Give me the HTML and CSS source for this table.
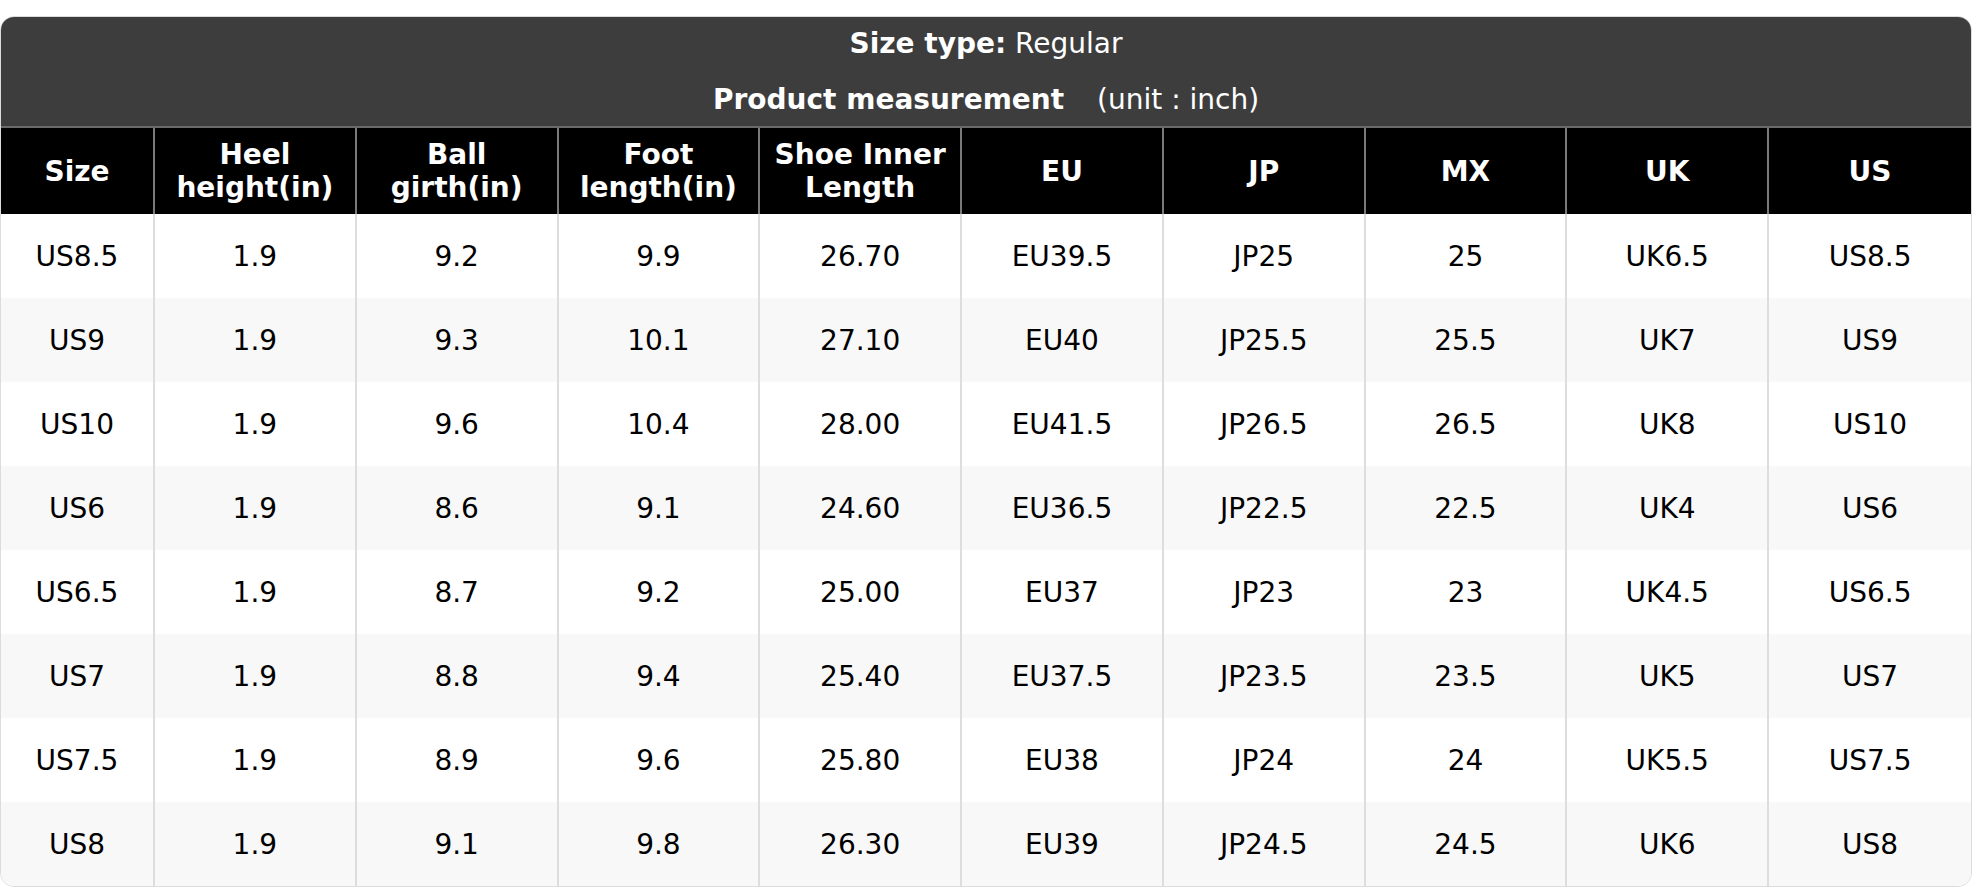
FILE: index.html
```html
<!DOCTYPE html>
<html lang="en">
<head>
<meta charset="utf-8">
<title>Size chart</title>
<link rel="stylesheet" href="styles.css">
</head>
<body>
<div class="chart">
  <div class="titles">
    <div class="title-line first"><b>Size type:</b> Regular</div>
    <div class="title-line second"><b>Product measurement</b> <span class="unit">(unit : inch)</span></div>
  </div>
  <table class="grid">
    <colgroup>
      <col class="col-size">
      <col><col><col><col><col><col><col><col><col>
    </colgroup>
    <thead>
      <tr>
        <th>Size</th>
        <th>Heel<br>height(in)</th>
        <th>Ball<br>girth(in)</th>
        <th>Foot<br>length(in)</th>
        <th>Shoe Inner<br>Length</th>
        <th>EU</th>
        <th>JP</th>
        <th>MX</th>
        <th>UK</th>
        <th>US</th>
      </tr>
    </thead>
    <tbody>
      <tr><td>US8.5</td><td>1.9</td><td>9.2</td><td>9.9</td><td>26.70</td><td>EU39.5</td><td>JP25</td><td>25</td><td>UK6.5</td><td>US8.5</td></tr>
      <tr><td>US9</td><td>1.9</td><td>9.3</td><td>10.1</td><td>27.10</td><td>EU40</td><td>JP25.5</td><td>25.5</td><td>UK7</td><td>US9</td></tr>
      <tr><td>US10</td><td>1.9</td><td>9.6</td><td>10.4</td><td>28.00</td><td>EU41.5</td><td>JP26.5</td><td>26.5</td><td>UK8</td><td>US10</td></tr>
      <tr><td>US6</td><td>1.9</td><td>8.6</td><td>9.1</td><td>24.60</td><td>EU36.5</td><td>JP22.5</td><td>22.5</td><td>UK4</td><td>US6</td></tr>
      <tr><td>US6.5</td><td>1.9</td><td>8.7</td><td>9.2</td><td>25.00</td><td>EU37</td><td>JP23</td><td>23</td><td>UK4.5</td><td>US6.5</td></tr>
      <tr><td>US7</td><td>1.9</td><td>8.8</td><td>9.4</td><td>25.40</td><td>EU37.5</td><td>JP23.5</td><td>23.5</td><td>UK5</td><td>US7</td></tr>
      <tr><td>US7.5</td><td>1.9</td><td>8.9</td><td>9.6</td><td>25.80</td><td>EU38</td><td>JP24</td><td>24</td><td>UK5.5</td><td>US7.5</td></tr>
      <tr><td>US8</td><td>1.9</td><td>9.1</td><td>9.8</td><td>26.30</td><td>EU39</td><td>JP24.5</td><td>24.5</td><td>UK6</td><td>US8</td></tr>
    </tbody>
  </table>
</div>
</body>
</html>
```

FILE: styles.css
```css
html, body {
  margin: 0;
  padding: 0;
  background: #ffffff;
}

body {
  padding-top: 16px;
  font-family: "DejaVu Sans", "Liberation Sans", sans-serif;
  font-size: 28px;
  color: #000000;
}

.chart {
  border: 1px solid #dcdcdc;
  border-radius: 14px;
  overflow: hidden;
  background: #ffffff;
}

.titles {
  background: #3d3d3d;
  color: #ffffff;
  text-align: center;
  border-bottom: 2px solid #6a6a6a;
}

.title-line {
  line-height: 34px;
}

.title-line.first {
  padding: 10px 0 9px;
}

.title-line.second {
  padding: 13px 0 9px;
}

.unit {
  margin-left: 24px;
}

.grid {
  width: 100%;
  border-collapse: separate;
  border-spacing: 0;
  table-layout: fixed;
}

.col-size {
  width: 154px;
}

.grid th {
  background: #000000;
  color: #ffffff;
  font-weight: bold;
  line-height: 33px;
  padding: 10px 2px;
  text-align: center;
  border-right: 2px solid #7a7a7a;
}

.grid td {
  text-align: center;
  line-height: 34px;
  padding: 26px 2px 24px;
  border-right: 2px solid #dddddd;
}

.grid th:last-child,
.grid td:last-child {
  border-right: none;
}

.grid tbody tr:nth-child(even) td {
  background: #f8f8f8;
}
```
